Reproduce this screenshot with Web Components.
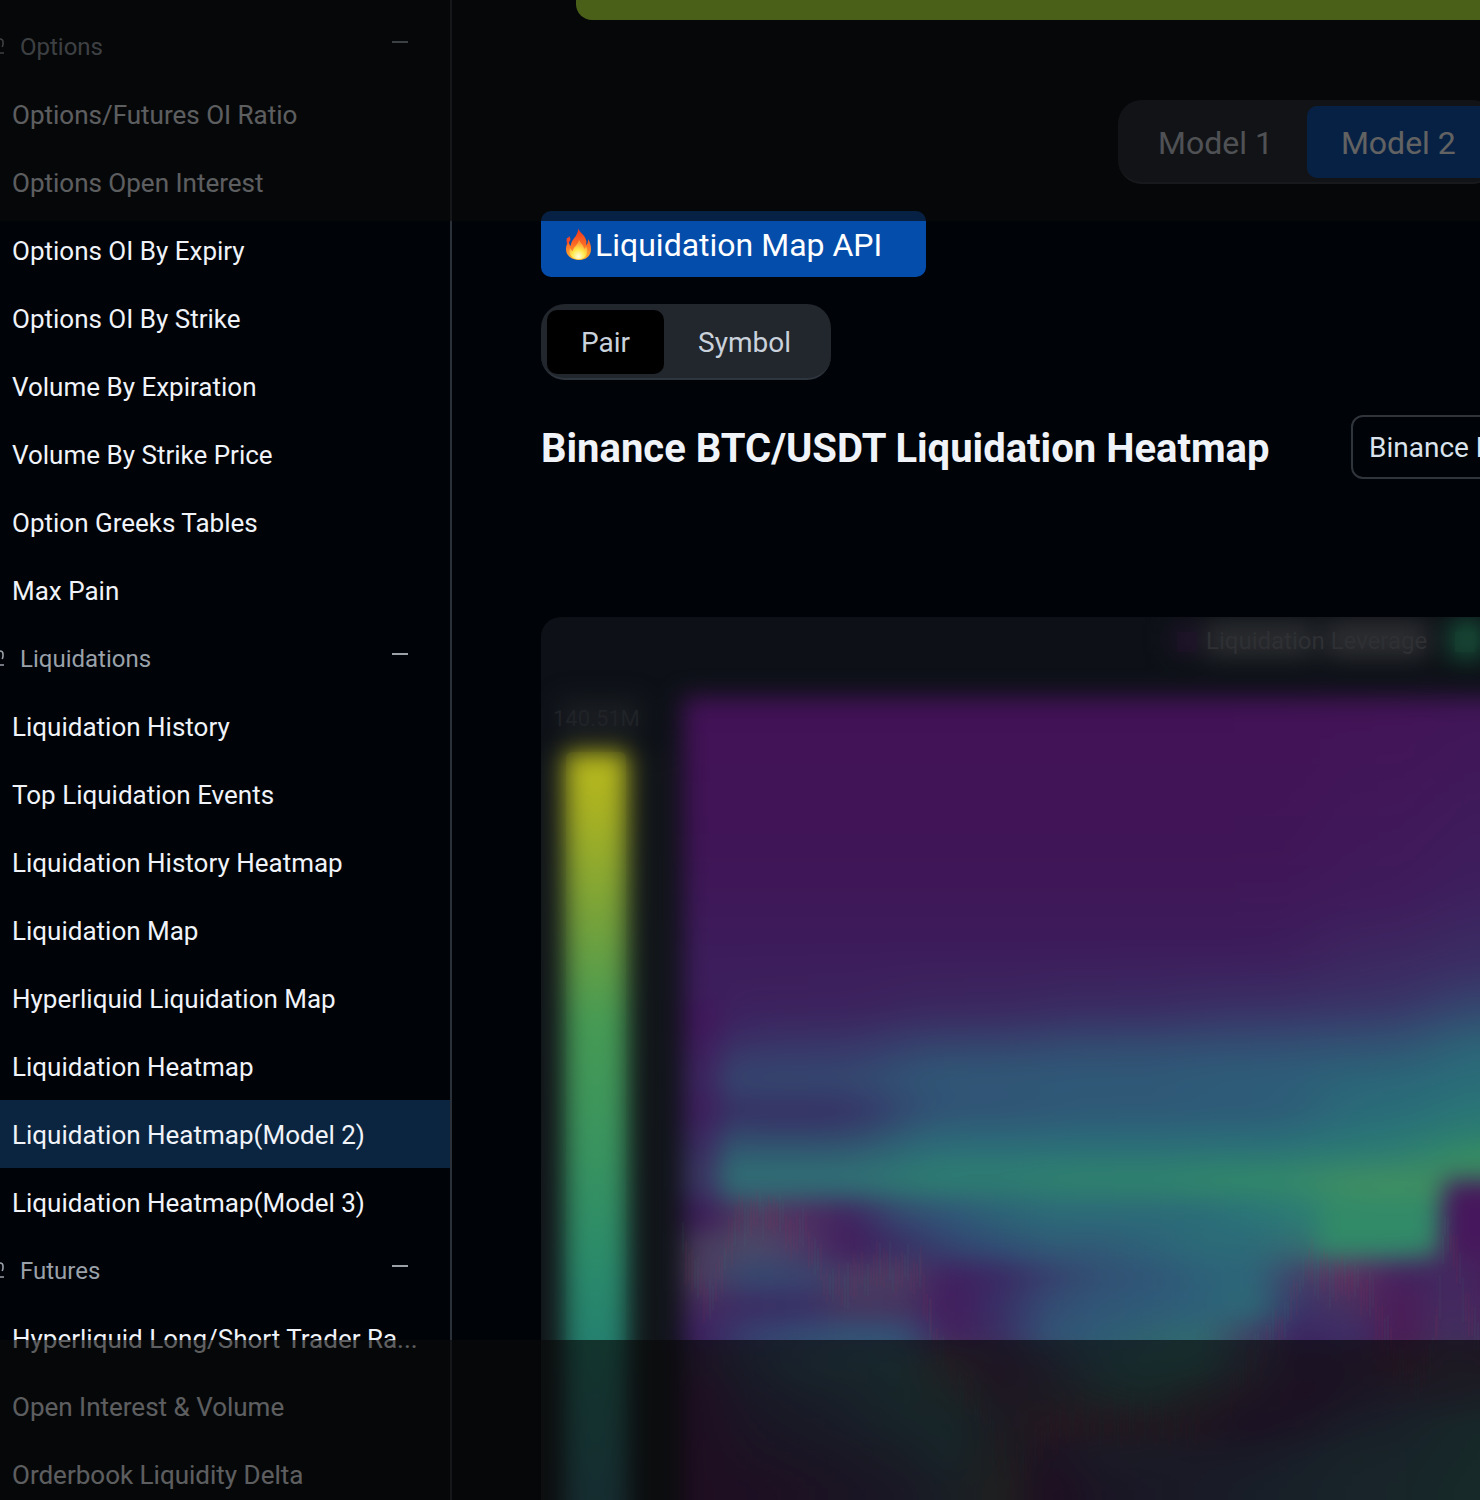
<!DOCTYPE html>
<html lang="en">
<head>
<meta charset="utf-8">
<title>Binance BTC/USDT Liquidation Heatmap</title>
<style>
  html { background: #000308; }
  body { margin: 0; height: 100vh; overflow: hidden; color: #f0f3f8; font-family: Roboto, "Noto Sans", sans-serif; }
</style>
</head>
<body>
<heatmap-app></heatmap-app>
<script>
const define = (name, html, setup) => customElements.define(name, class extends HTMLElement {
  constructor() {
    super();
    const t = document.createElement('template');
    t.innerHTML = html;
    this.attachShadow({ mode: 'open' }).append(t.content.cloneNode(true));
  }
  connectedCallback() { if (setup) setup(this, this.shadowRoot); }
});

define('nav-link', `
  <style>
    :host { display: block; }
    a { display: flex; align-items: center; height: 68px; padding: 2px 12px 0; box-sizing: border-box; font-size: 26px; line-height: 36px;
        color: #f0f3f8; text-decoration: none; white-space: nowrap; }
    :host([active]) a { background: #0b2540; }
  </style>
  <a href="#"><slot></slot></a>`,
  (el, root) => { if (el.hasAttribute('active')) root.querySelector('a').setAttribute('aria-current', 'page'); });

define('nav-group', `
  <style>
    :host { display: block; }
    button { display: flex; align-items: center; width: 100%; height: 68px; padding: 2px 42px 0 0; border: 0;
             background: none; color: #9aa1a9; font: inherit; font-size: 24px; line-height: 36px; text-align: left; gap: 16px; }
    .icon { margin-left: -16px; width: 20px; height: 20px; flex: none; }
    .label { flex: 1; }
    .sign { width: 16px; height: 12px; flex: none; }
  </style>
  <button type="button" aria-expanded="true">
    <svg class="icon" viewBox="0 0 20 20" fill="none" stroke="currentColor" stroke-width="1.6" aria-hidden="true">
      <path d="M4 10V6a4 4 0 0 1 4-4h8c2 0 3 1 3 3v2c0 1-.3 1.700-.8 3M2 16h18"/></svg>
    <span class="label"></span>
    <svg class="sign" viewBox="0 0 16 12" aria-hidden="true"><path d="M0 0h16v2H0z" fill="currentColor"/></svg>
  </button>
  <slot></slot>`,
  (el, root) => { root.querySelector('.label').textContent = el.getAttribute('label'); });

define('side-nav', `
  <style>
    :host { display: block; flex: none; width: 450px; padding-top: 12px; border-right: 2px solid #2b3138; overflow: hidden; }
  </style>
  <nav aria-label="Data"><slot></slot></nav>`);

define('tab-option', `
  <style>
    :host { display: block; }
    button { height: 64px; padding: 2px 34px 0; border: 0; border-radius: 10px; background: none; color: #c9d1db;
             font: inherit; font-size: 28px; line-height: 36px; white-space: nowrap; }
    :host([selected]) button { background: #000; }
    :host([large]) button { height: 72px; font-size: 32px; }
    :host([large][selected]) button { background: #054dab; color: #fff; }
  </style>
  <button type="button"><slot></slot></button>`,
  (el, root) => root.querySelector('button').setAttribute('aria-pressed', el.hasAttribute('selected')));

define('tab-group', `
  <style>
    :host { display: flex; width: max-content; padding: 6px 6px 4px; border-radius: 24px; background: #22262d; border-bottom: 2px solid #2f353d; }
  </style>
  <slot></slot>`);

define('api-link', `
  <style>
    :host { display: block; }
    a { display: inline-flex; align-items: center; height: 66px; padding: 2px 44px 0 24px; gap: 3px; box-sizing: border-box;
        border-radius: 10px; background: #054dab; color: #fff; text-decoration: none; font-size: 32px; line-height: 40px; vertical-align: top; }
    svg { width: 27px; height: 34px; }
  </style>
  <a href="#">
    <svg viewBox="0 0 27 34" aria-hidden="true">
      <defs>
        <linearGradient id="f" x1="0" y1="0" x2="0" y2="1"><stop offset="0" stop-color="#f0341c"/><stop offset=".5" stop-color="#fb6a25"/><stop offset="1" stop-color="#ffb62e"/></linearGradient>
        <radialGradient id="g" cx=".5" cy=".85" r=".7"><stop offset="0" stop-color="#fffde0"/><stop offset=".5" stop-color="#ffe94a"/><stop offset="1" stop-color="#ff9d35"/></radialGradient>
      </defs>
      <path fill="url(#f)" d="M13 0c1 4 7 7 8 12 1 2 0 4 0 5 2-1 2-4 2-6 2 3 3 6 3 10 0 7-5 11-12 11S1 28 1 21c0-3 1-6 3-8 0 2 0 4 2 5C5 12 14 8 13 0z"/>
      <path fill="#f3482a" d="M4 8c1 1 2 3 1 5-1 1-2 2-3 4 0-3-1-5 0-7 1 0 2-1 2-2z"/>
      <path fill="url(#g)" d="M14 12c2 4 5 5 5 9 1-1 2-2 2-3 2 4 2 7-1 11-3 3-10 3-13 0-3-3-3-6-2-9 1 2 2 3 3 3 0-4 5-6 6-11z"/>
    </svg>
    <slot></slot>
  </a>`);

define('pair-picker', `
  <style>
    :host { display: block; flex: none; }
    select { appearance: none; width: 340px; height: 64px; padding: 0 16px; border: 2px solid #30353c; border-radius: 12px;
             background: transparent; color: #dbe4ec; font: inherit; font-size: 28px; }
  </style>
  <select aria-label="Trading pair"><option>Binance BTC/USDT</option></select>`);

define('heat-chart', `
  <style>
    :host { display: block; border-radius: 20px 0 0 0; background: #0d1117; overflow: hidden; }
    svg { display: block; width: 100%; }
    text { font-family: Roboto, sans-serif; font-size: 24px; fill: #2e3034; }
    .peak { font-size: 22px; fill: #202328; }
  </style>
  <svg viewBox="541 617 939 883" role="img" aria-label="Liquidation heatmap">
    <defs>
      <filter id="soft" filterUnits="userSpaceOnUse" x="480" y="560" width="1200" height="1100" color-interpolation-filters="sRGB"><feGaussianBlur stdDeviation="12"/></filter>
      <filter id="wide" filterUnits="userSpaceOnUse" x="500" y="560" width="1300" height="1100" color-interpolation-filters="sRGB"><feGaussianBlur stdDeviation="32 3"/></filter>
      <clipPath id="plot"><rect x="683" y="697" width="900" height="900"/></clipPath>
      <linearGradient id="scale" gradientUnits="userSpaceOnUse" x1="0" y1="752" x2="0" y2="1500">
        <stop offset="0" stop-color="#b9b91c"/><stop offset=".08" stop-color="#a8b122"/><stop offset=".22" stop-color="#77a23a"/>
        <stop offset=".36" stop-color="#469a54"/><stop offset=".52" stop-color="#3a945e"/><stop offset=".68" stop-color="#2b8b6a"/>
        <stop offset=".8" stop-color="#24806f"/><stop offset="1" stop-color="#2d6c76"/>
      </linearGradient>
    </defs>
    <g filter="url(#soft)">
      <rect x="560" y="700" width="80" height="34" fill="#1b1e22"/>
      <rect x="520" y="750" width="150" height="900" fill="#12161a"/>
      <rect x="1205" y="620" width="110" height="38" fill="#2a2c2f"/>
      <rect x="1325" y="620" width="104" height="38" fill="#2d2e31"/>
      <rect x="1172" y="624" width="26" height="30" fill="#20142a"/>
      <rect x="1450" y="620" width="34" height="38" fill="#17523a"/>
      <rect x="565" y="752" width="62" height="860" fill="url(#scale)"/>
      <g clip-path="url(#plot)">
        <g id="strips" filter="url(#wide)"></g>
        <path fill="#42145a" d="M660 1000h60v205h-60z" opacity=".6"/>
        <g id="rows"></g>
        <path fill="#318a68" d="M1325 1200h114v54h-124z"/>
        <path fill="#46175c" d="M1444 1180h80v75h-80z"/>
      </g>
    </g>
    <g id="ticks"></g>
    <rect x="566" y="752" width="60" height="850" rx="6" fill="url(#scale)" opacity=".08"/>
    <path d="M1177 632h20v20h-20z" fill="#24142c" opacity=".4"/>
    <path d="M1455 632h20v20h-20z" fill="#174032" opacity=".5"/>
    <text x="1206" y="649">Liquidation Leverage</text>
    <text x="553" y="726" class="peak">140.51M</text>
  </svg>`,
  (el, root) => {
    const ns = 'http://www.w3.org/2000/svg';
    const defs = root.querySelector('defs');
    const make = (tag, attrs, parent) => {
      const n = document.createElementNS(ns, tag);
      for (const k in attrs) n.setAttribute(k, attrs[k]);
      return parent.appendChild(n);
    };

    /* Upper plot: colour profiles downwards; neighbouring strips are blended sideways. */
    const top = [[697, '#431257'], [850, '#401557'], [950, '#3d1c5b']];
    const columns = [
      [560, 170, [...top, [1030, '#3d205f'], [1080, '#36446c'], [1110, '#382e62'], [1145, '#31546f'], [1178, '#2f7174'], [1205, '#34506f']]],
      [730, 160, [...top, [1010, '#3c225e'], [1050, '#38386a'], [1080, '#33496f'], [1114, '#372d63'], [1144, '#315270'], [1178, '#2f7374'], [1205, '#335772']]],
      [890, 150, [...top, [1010, '#3b2860'], [1045, '#35446d'], [1075, '#2f5876'], [1108, '#315275'], [1144, '#2c6b79'], [1180, '#2d8070'], [1210, '#2e6576']]],
      [1040, 150, [...top, [1010, '#3a2c63'], [1045, '#334b70'], [1075, '#2f5877'], [1108, '#2f5877'], [1144, '#2b6c79'], [1182, '#2f866c'], [1212, '#2d6877']]],
      [1190, 130, [...top, [1005, '#3a2f65'], [1048, '#325073'], [1078, '#2d5d79'], [1108, '#2e5a78'], [1144, '#2a6e79'], [1182, '#328b68'], [1214, '#2b7177']]],
      [1320, 115, [[697, '#431357'], [900, '#3f1b5b'], [1000, '#3a3165'], [1042, '#325073'], [1075, '#2b6478'], [1113, '#2a6c79'], [1150, '#2a7a74'], [1185, '#439160'], [1215, '#33896a']]],
      [1435, 240, [[697, '#411558'], [880, '#3e1e5d'], [970, '#3a3065'], [1010, '#344a70'], [1045, '#2c6578'], [1098, '#297278'], [1130, '#2b7c72'], [1158, '#38905f'], [1185, '#3b8a60']]]
    ];
    columns.forEach(([x, width, stops], i) => {
      const g = make('linearGradient', { id: 'col' + i, gradientUnits: 'userSpaceOnUse', x1: 0, y1: 697, x2: 0, y2: 1500 }, defs);
      for (const [y, c] of stops) make('stop', { offset: (y - 697) / 803, 'stop-color': c }, g);
      make('rect', { x, width, y: 660, height: 960, fill: `url(#col${i})` }, root.querySelector('#strips'));
    });

    /* Lower plot: one row every 30 units, a colour every 50 units from x = 700. */
    const rows = [
      '3b1c58 503c60 502d60 40235f 35476f 305577 2d6177 2c6a78 2c6a78 2c6a78 2b6c78 2a7478 2c7c74 318768 318768 433560 431a5c',
      '483a5c 4a4a68 4c3a66 421d5d 392f64 33446f 304f74 305a76 305a77 2d6278 2c6a78 2c6a78 346c72 387070 387070 4b2a5c 431a5c',
      '4e3c60 35486f 38456e 463a63 4b3c62 402060 3a2a64 36406d 325073 305577 2d6079 2d6678 41416a 5c3060 45205e 41285f 481c5a',
      '442a5e 3b2d63 382f66 46375f 453560 431c5e 382f66 334c72 305677 2f5a78 2e6079 2c6a76 3b3468 48305f 4c1c58 422c60 4a205a',
      '3d2060 364070 344a72 325276 335075 44215c 3a2f62 325375 2f5c76 2f6270 2f6a70 3e4466 3c2462 3c2f66 4b1b55 40305e 45255a',
      '3e2450 333d5c 325066 335866 2f6068 4a444e 452850 3a3e5c 305c68 2f6868 2f6664 3f3c58 3c2250 3c2650 4a2848 3d3850 42304c',
      '451a50 36325a 33405c 324860 305a64 3a5055 42304c 40384e 385058 33585c 3f3f50 422c4c 3c1c50 3a2a54 3b3858 3c3c55 354858',
      '451a50 3a2a55 353458 34405c 30505f 2f585f 3c3a50 54304a 4a3048 463048 452c48 3a1f50 3a2a54 36405c 34485e 305a62 2f6064',
      '48184f 3c2450 392a52 363254 344058 305460 3f4048 3f2250 383858 363c5a 363658 36385a 34445e 325060 325362 2f5c62 2f6462',
      '48184f 421a50 3e2250 392a52 383256 344658 464848 42194e 392c55 38345a 363a5a 344460 344a60 325462 325662 2f6060 2f6862'
    ];
    rows.forEach((line, i) => {
      const g = make('linearGradient', { id: 'row' + i, gradientUnits: 'userSpaceOnUse', x1: 700, y1: 0, x2: 1500, y2: 0 }, defs);
      line.split(' ').forEach((c, k) => make('stop', { offset: k / 16, 'stop-color': '#' + c }, g));
      make('rect', { x: 640, y: 1201 + i * 30, width: 960, height: i === 9 ? 150 : 31, fill: `url(#row${i})` }, root.querySelector('#rows'));
    });

    /* Candlesticks of the price line, seen faintly through the haze. */
    const runs = [
      [[682, 1245], [700, 1290], [712, 1300], [725, 1250], [735, 1220], [770, 1212], [790, 1230], [805, 1235], [820, 1270], [835, 1290], [855, 1280], [880, 1268], [920, 1272], [930, 1325], [950, 1375], [980, 1410], [1010, 1470], [1035, 1450], [1060, 1420], [1200, 1425]],
      [[1230, 1390], [1290, 1310], [1302, 1270], [1345, 1280], [1372, 1300], [1390, 1350], [1420, 1385], [1436, 1330], [1444, 1215], [1462, 1290], [1478, 1350]]
    ];
    const layer = root.querySelector('#ticks');
    for (const run of runs) {
      for (let s = 0; s < run.length - 1; s++) {
        const [x0, y0] = run[s], [x1, y1] = run[s + 1];
        for (let x = x0; x < x1; x += 3) {
          const y = y0 + (y1 - y0) * (x - x0) / (x1 - x0) + (x * 37 % 23 - 11);
          const h = 18 + x * 53 % 29;
          make('rect', { x, y: y - h / 2, width: 2, height: h, fill: x * 7 % 5 < 3 ? '#c0304a' : '#2f9a7c', opacity: .06 }, layer);
        }
      }
    }
  });

define('focus-mask', `
  <style>
    :host { position: absolute; inset: 0; display: grid; grid-template-rows: 221px 1119px 1fr; pointer-events: none; }
    i { background: rgba(9, 9, 9, .64); }
  </style>
  <i></i><span></span><i></i>`);

define('heatmap-app', `
  <style>
    :host { position: relative; display: flex; height: 100%; overflow: hidden; }
    main { flex: 1; min-width: 0; padding-left: 89px; overflow: hidden; }
    .banner { height: 20px; margin-left: 35px; border-radius: 0 0 0 16px; background: #bdf937; }
    .models { margin: 80px 0 27px 577px; }
    .scope { margin: 27px 0 35px; }
    .head { display: flex; align-items: center; gap: 86px; margin-bottom: 138px; }
    h1 { flex: none; width: 724px; margin: 0; padding-top: 4px; font-family: Roboto, sans-serif; font-size: 40px; line-height: 48px; font-weight: 700; white-space: nowrap; }
  </style>
  <side-nav>
    <nav-group label="Options">
      <nav-link>Options/Futures OI Ratio</nav-link>
      <nav-link>Options Open Interest</nav-link>
      <nav-link>Options OI By Expiry</nav-link>
      <nav-link>Options OI By Strike</nav-link>
      <nav-link>Volume By Expiration</nav-link>
      <nav-link>Volume By Strike Price</nav-link>
      <nav-link>Option Greeks Tables</nav-link>
      <nav-link>Max Pain</nav-link>
    </nav-group>
    <nav-group label="Liquidations">
      <nav-link>Liquidation History</nav-link>
      <nav-link>Top Liquidation Events</nav-link>
      <nav-link>Liquidation History Heatmap</nav-link>
      <nav-link>Liquidation Map</nav-link>
      <nav-link>Hyperliquid Liquidation Map</nav-link>
      <nav-link>Liquidation Heatmap</nav-link>
      <nav-link active>Liquidation Heatmap(Model 2)</nav-link>
      <nav-link>Liquidation Heatmap(Model 3)</nav-link>
    </nav-group>
    <nav-group label="Futures">
      <nav-link>Hyperliquid Long/Short Trader Ra...</nav-link>
      <nav-link>Open Interest &amp; Volume</nav-link>
      <nav-link>Orderbook Liquidity Delta</nav-link>
    </nav-group>
  </side-nav>
  <main>
    <div class="banner"></div>
    <tab-group class="models">
      <tab-option large>Model 1</tab-option>
      <tab-option large selected>Model 2</tab-option>
    </tab-group>
    <api-link>Liquidation Map API</api-link>
    <tab-group class="scope">
      <tab-option selected>Pair</tab-option>
      <tab-option>Symbol</tab-option>
    </tab-group>
    <div class="head">
      <h1>Binance BTC/USDT Liquidation Heatmap</h1>
      <pair-picker></pair-picker>
    </div>
    <heat-chart></heat-chart>
  </main>
  <focus-mask></focus-mask>`);
</script>
</body>
</html>
